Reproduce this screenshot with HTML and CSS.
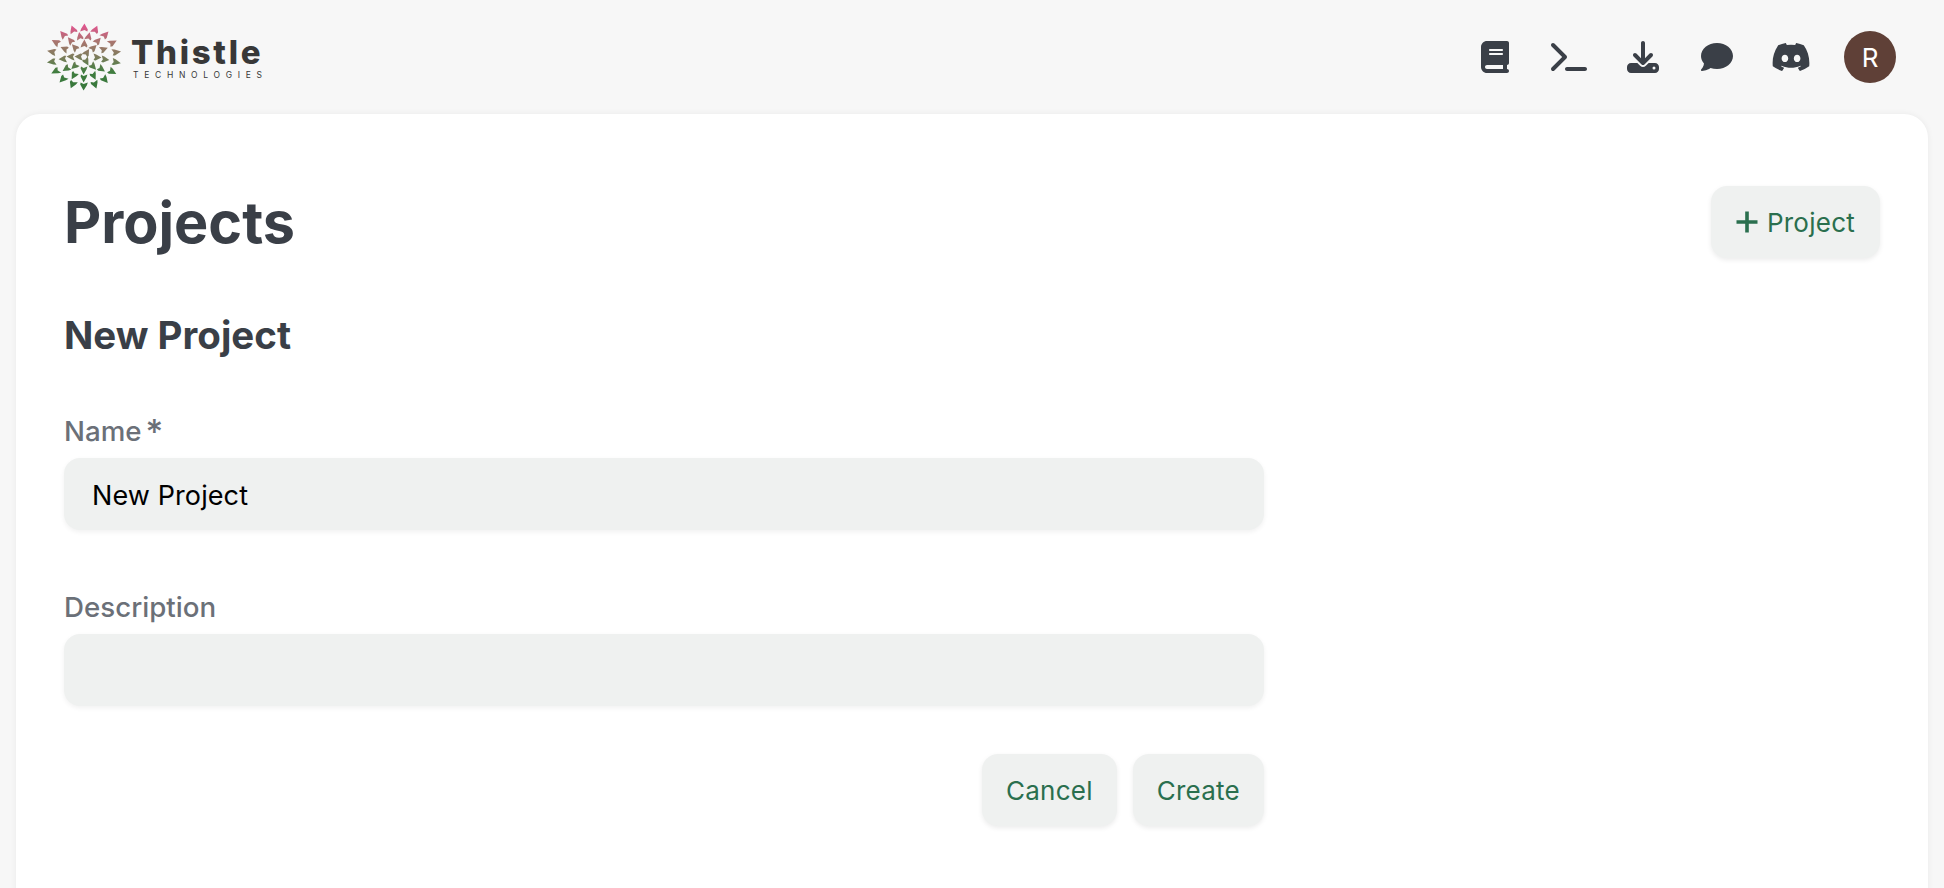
FILE: index.html
```html
<!DOCTYPE html>
<html lang="en">
<head>
  <meta charset="UTF-8" />
  <title>Projects</title>
  <link rel="stylesheet" href="styles.css">
</head>
<body>
  <header class="topbar">
    <a class="brand" href="#">
      <svg class="brand-mark" width="76" height="70" viewBox="-38 -35 76 70">
        <defs>
          <path id="leaf" d="M0.4 -4.5 L3.4 1.5 L3 3.5 L0.4 2 L-3.4 3.5 L-2.6 0.8Z" />
          <linearGradient id="leaf-fade" x1="0" y1="0" x2="0" y2="1">
            <stop offset="0.05" stop-color="#e0558e" />
            <stop offset="0.28" stop-color="#a9756f" />
            <stop offset="0.5" stop-color="#7d7d5c" />
            <stop offset="0.72" stop-color="#3f7d3f" />
            <stop offset="1" stop-color="#35753a" />
          </linearGradient>
          <mask id="leaves" maskUnits="userSpaceOnUse" x="-38" y="-35" width="76" height="70">
            <g fill="#fff">
              <use href="#leaf" transform="scale(1.12 1) rotate(0) translate(0 -29)" />
              <use href="#leaf" transform="scale(1.12 1) rotate(20) translate(0 -29)" />
              <use href="#leaf" transform="scale(1.12 1) rotate(40) translate(0 -29)" />
              <use href="#leaf" transform="scale(1.12 1) rotate(60) translate(0 -29)" />
              <use href="#leaf" transform="scale(1.12 1) rotate(80) translate(0 -29)" />
              <use href="#leaf" transform="scale(1.12 1) rotate(100) translate(0 -29)" />
              <use href="#leaf" transform="scale(1.12 1) rotate(120) translate(0 -29)" />
              <use href="#leaf" transform="scale(1.12 1) rotate(140) translate(0 -29)" />
              <use href="#leaf" transform="scale(1.12 1) rotate(160) translate(0 -29)" />
              <use href="#leaf" transform="scale(1.12 1) rotate(180) translate(0 -29)" />
              <use href="#leaf" transform="scale(1.12 1) rotate(200) translate(0 -29)" />
              <use href="#leaf" transform="scale(1.12 1) rotate(220) translate(0 -29)" />
              <use href="#leaf" transform="scale(1.12 1) rotate(240) translate(0 -29)" />
              <use href="#leaf" transform="scale(1.12 1) rotate(260) translate(0 -29)" />
              <use href="#leaf" transform="scale(1.12 1) rotate(280) translate(0 -29)" />
              <use href="#leaf" transform="scale(1.12 1) rotate(300) translate(0 -29)" />
              <use href="#leaf" transform="scale(1.12 1) rotate(320) translate(0 -29)" />
              <use href="#leaf" transform="scale(1.12 1) rotate(340) translate(0 -29)" />
              <use href="#leaf" transform="rotate(12) translate(0 -21)" />
              <use href="#leaf" transform="rotate(40) translate(0 -21)" />
              <use href="#leaf" transform="rotate(68) translate(0 -21)" />
              <use href="#leaf" transform="rotate(96) translate(0 -21)" />
              <use href="#leaf" transform="rotate(124) translate(0 -21)" />
              <use href="#leaf" transform="rotate(152) translate(0 -21)" />
              <use href="#leaf" transform="rotate(180) translate(0 -21)" />
              <use href="#leaf" transform="rotate(208) translate(0 -21)" />
              <use href="#leaf" transform="rotate(236) translate(0 -21)" />
              <use href="#leaf" transform="rotate(264) translate(0 -21)" />
              <use href="#leaf" transform="rotate(292) translate(0 -21)" />
              <use href="#leaf" transform="rotate(320) translate(0 -21)" />
              <use href="#leaf" transform="rotate(348) translate(0 -21)" />
              <use href="#leaf" transform="rotate(0) translate(0 -13)" />
              <use href="#leaf" transform="rotate(45) translate(0 -13)" />
              <use href="#leaf" transform="rotate(90) translate(0 -13)" />
              <use href="#leaf" transform="rotate(135) translate(0 -13)" />
              <use href="#leaf" transform="rotate(180) translate(0 -13)" />
              <use href="#leaf" transform="rotate(225) translate(0 -13)" />
              <use href="#leaf" transform="rotate(270) translate(0 -13)" />
              <use href="#leaf" transform="rotate(315) translate(0 -13)" />
              <use href="#leaf" transform="rotate(30) translate(0 -5)" />
              <use href="#leaf" transform="rotate(150) translate(0 -5)" />
              <use href="#leaf" transform="rotate(270) translate(0 -5)" />
            </g>
          </mask>
        </defs>
        <rect x="-38" y="-35" width="76" height="70" fill="url(#leaf-fade)" mask="url(#leaves)" />
      </svg>
      <span class="brand-text">
        <span class="brand-name">Thistle</span>
        <span class="brand-sub">TECHNOLOGIES</span>
      </span>
    </a>
    <nav class="topnav">
      <a class="nav-icon" href="#" aria-label="Docs">
        <svg width="28" height="32" viewBox="0 0 448 512"><path d="M96 0C43 0 0 43 0 96V416c0 53 43 96 96 96H384h32c17.7 0 32-14.3 32-32s-14.3-32-32-32V384c17.7 0 32-14.3 32-32V32c0-17.7-14.3-32-32-32H384 96zm0 384H352v64H96c-17.7 0-32-14.3-32-32s14.3-32 32-32zm32-240c0-8.8 7.2-16 16-16H336c8.8 0 16 7.2 16 16s-7.2 16-16 16H144c-8.8 0-16-7.2-16-16zm16 48H336c8.8 0 16 7.2 16 16s-7.2 16-16 16H144c-8.8 0-16-7.2-16-16s7.2-16 16-16z"/></svg>
      </a>
      <a class="nav-icon" href="#" aria-label="Terminal">
        <svg width="36" height="32" viewBox="0 0 576 512"><path d="M9.4 86.6C-3.1 74.1-3.1 53.9 9.4 41.4s32.8-12.5 45.3 0l192 192c12.5 12.5 12.5 32.8 0 45.3l-192 192c-12.5 12.5-32.8 12.5-45.3 0s-12.5-32.8 0-45.3L178.7 256 9.4 86.6zM256 416H544c17.7 0 32 14.3 32 32s-14.3 32-32 32H256c-17.7 0-32-14.3-32-32s14.3-32 32-32z"/></svg>
      </a>
      <a class="nav-icon" href="#" aria-label="Download">
        <svg width="32" height="32" viewBox="0 0 512 512"><path d="M288 32c0-17.7-14.3-32-32-32s-32 14.3-32 32V274.7l-73.4-73.4c-12.5-12.5-32.8-12.5-45.3 0s-12.5 32.8 0 45.3l128 128c12.5 12.5 32.8 12.5 45.3 0l128-128c12.5-12.5 12.5-32.8 0-45.3s-32.8-12.5-45.3 0L288 274.7V32zM64 352c-35.3 0-64 28.7-64 64v32c0 35.3 28.7 64 64 64H448c35.3 0 64-28.7 64-64V416c0-35.3-28.7-64-64-64H346.5l-45.3 45.3c-25 25-65.5 25-90.5 0L165.5 352H64zm368 56a24 24 0 1 1 0 48 24 24 0 1 1 0-48z"/></svg>
      </a>
      <a class="nav-icon" href="#" aria-label="Chat">
        <svg width="32" height="32" viewBox="0 0 512 512"><path d="M512 240c0 114.9-114.6 208-256 208c-37.1 0-72.3-6.4-104.1-17.9c-11.9 8.7-31.3 20.6-54.3 30.6C73.6 471.1 44.7 480 16 480c-6.5 0-12.3-3.9-14.8-9.9c-2.5-6-1.1-12.8 3.4-17.4l0 0 0 0 0 0 0 0 .3-.3c.3-.3 .7-.7 1.3-1.4c1.1-1.2 2.8-3.1 4.9-5.7c4.1-5 9.6-12.4 15.2-21.6c10-16.6 19.5-38.4 21.4-62.9C17.7 326.8 0 285.1 0 240C0 125.1 114.6 32 256 32s256 93.1 256 208z"/></svg>
      </a>
      <a class="nav-icon" href="#" aria-label="Discord">
        <svg width="40" height="32" viewBox="0 0 640 512"><path d="M524.531,69.836a1.5,1.5,0,0,0-.764-.7A485.065,485.065,0,0,0,404.081,32.03a1.816,1.816,0,0,0-1.923.91,337.461,337.461,0,0,0-14.9,30.6,447.848,447.848,0,0,0-134.426,0,309.541,309.541,0,0,0-15.135-30.6,1.89,1.89,0,0,0-1.924-.91A483.689,483.689,0,0,0,116.085,69.137a1.712,1.712,0,0,0-.788.676C39.068,183.651,18.186,294.69,28.43,404.354a2.016,2.016,0,0,0,.765,1.375A487.666,487.666,0,0,0,176.02,479.918a1.9,1.9,0,0,0,2.063-.676A348.2,348.2,0,0,0,208.12,430.4a1.86,1.86,0,0,0-1.019-2.588,321.173,321.173,0,0,1-45.868-21.853,1.885,1.885,0,0,1-.185-3.126c3.082-2.309,6.166-4.711,9.109-7.137a1.819,1.819,0,0,1,1.9-.256c96.229,43.917,200.41,43.917,295.5,0a1.812,1.812,0,0,1,1.924.233c2.944,2.426,6.027,4.851,9.132,7.16a1.884,1.884,0,0,1-.162,3.126,301.407,301.407,0,0,1-45.89,21.83,1.875,1.875,0,0,0-1,2.611,391.055,391.055,0,0,0,30.014,48.815,1.864,1.864,0,0,0,2.063.7A486.048,486.048,0,0,0,610.7,405.729a1.882,1.882,0,0,0,.765-1.352C623.729,277.594,590.933,167.465,524.531,69.836ZM222.491,337.58c-28.972,0-52.844-26.587-52.844-59.239S193.056,219.1,222.491,219.1c29.665,0,53.306,26.82,52.843,59.239C275.334,310.993,251.924,337.58,222.491,337.58Zm195.38,0c-28.971,0-52.843-26.587-52.843-59.239S388.437,219.1,417.871,219.1c29.666,0,53.307,26.82,52.844,59.239C470.715,310.993,447.538,337.58,417.871,337.58Z"/></svg>
      </a>
      <span class="avatar">R</span>
    </nav>
  </header>

  <main class="card">
    <div class="page-head">
      <h1>Projects</h1>
      <button class="btn btn-add" type="button">
        <svg class="btn-plus" width="24" height="24" viewBox="0 0 24 24"><path d="M12 1.5V22.5M1.5 12H22.5" /></svg>
        Project
      </button>
    </div>

    <form class="project-form">
      <h2>New Project</h2>
      <div class="field">
        <label for="name">Name<span class="req">*</span></label>
        <input id="name" type="text" value="New Project" />
      </div>
      <div class="field">
        <label for="description">Description</label>
        <input id="description" type="text" />
      </div>
      <div class="form-actions">
        <button class="btn" type="button">Cancel</button>
        <button class="btn" type="submit">Create</button>
      </div>
    </form>
  </main>
</body>
</html>
```

FILE: styles.css
```css
* {
  margin: 0;
  padding: 0;
  box-sizing: border-box;
  font-family: 'Inter', 'Liberation Sans', sans-serif;
}

html, body {
  height: 100%;
  overflow: hidden;
}

body {
  background: #f7f7f7;
  color: #3a3f47;
}

.topbar {
  height: 114px;
  padding: 0 48px 0 46px;
  display: flex;
  justify-content: space-between;
  align-items: center;
}

.brand {
  display: flex;
  align-items: center;
  gap: 9px;
  text-decoration: none;
}

.brand-mark {
  display: block;
}

.brand-text {
  display: flex;
  flex-direction: column;
  color: #383838;
}

.brand-name {
  font-size: 33px;
  line-height: 34px;
  font-weight: 800;
  letter-spacing: 2.7px;
}

.brand-sub {
  font-size: 8.5px;
  line-height: 10px;
  margin-top: 1px;
  margin-left: 2px;
  letter-spacing: 5.7px;
  white-space: nowrap;
}

.topnav {
  display: flex;
  align-items: center;
  gap: 34px;
}

.nav-icon {
  width: 40px;
  display: flex;
  justify-content: center;
  fill: #3a3f47;
}

.avatar {
  width: 52px;
  height: 52px;
  margin-left: -1px;
  border-radius: 50%;
  background: #5f4037;
  color: #fff;
  font-size: 26px;
  display: flex;
  justify-content: center;
  align-items: center;
}

.card {
  margin: 0 16px;
  min-height: 820px;
  padding: 72px 48px 0;
  background: #fff;
  border-radius: 24px;
  box-shadow: 0 0 6px rgba(0, 0, 0, 0.06);
}

.page-head {
  display: flex;
  justify-content: space-between;
  align-items: center;
}

h1 {
  height: 72px;
  padding-top: 1px;
  font-size: 57.5px;
  font-weight: 700;
  line-height: 70px;
}

h2 {
  font-size: 38.5px;
  font-weight: 700;
  line-height: 44px;
  margin-top: 55px;
}

.project-form {
  width: 1200px;
}

.field {
  margin-top: 55px;
}

.field + .field {
  margin-top: 58px;
}

.field label {
  display: block;
  height: 36px;
  line-height: 38px;
  margin-bottom: 10px;
  font-size: 27.7px;
  font-weight: 500;
  color: #6b7078;
}

.req {
  margin-left: 4px;
  font-size: 34px;
  line-height: 1;
  vertical-align: -3px;
}

.field input {
  display: block;
  width: 100%;
  height: 72px;
  padding: 2px 28px 0;
  background: #eff1f0;
  border: none;
  outline: none;
  border-radius: 16px;
  box-shadow: 0 2px 5px rgba(0, 0, 0, 0.06);
  font-size: 27px;
  letter-spacing: 0.1px;
  color: #000;
}

.form-actions {
  margin-top: 48px;
  display: flex;
  justify-content: flex-end;
  gap: 16px;
}

.btn {
  height: 72px;
  padding: 0 24px;
  display: flex;
  align-items: center;
  gap: 9px;
  background: #eff1f0;
  border: none;
  border-radius: 16px;
  box-shadow: 0 2px 5px rgba(0, 0, 0, 0.08);
  font-size: 26px;
  letter-spacing: 0.25px;
  color: #2a6f4e;
  cursor: pointer;
}

.btn-add {
  gap: 8px;
  padding-right: 25px;
}

.btn-plus {
  fill: none;
  stroke: #2a6f4e;
  stroke-width: 3.6;
}
```
